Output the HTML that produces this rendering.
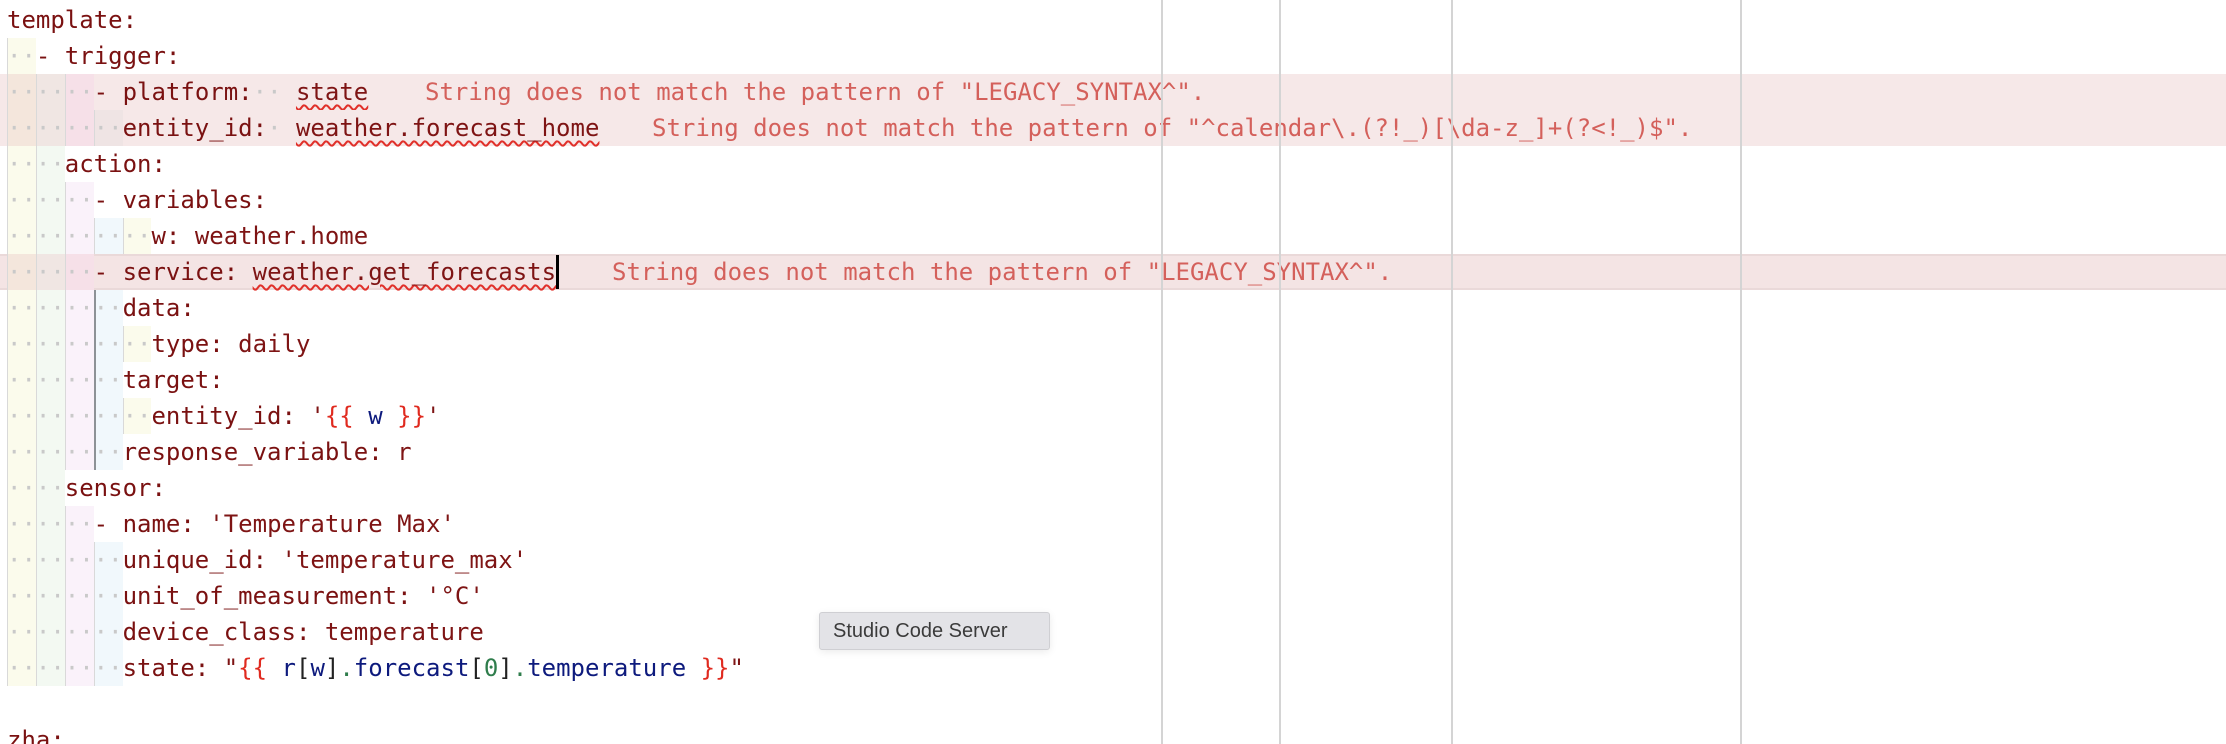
<!DOCTYPE html>
<html><head><meta charset="utf-8"><style>
html,body{margin:0;padding:0;background:#fff;width:2226px;height:744px;overflow:hidden;position:relative}
.l{position:absolute;left:0;width:2226px;height:36px;line-height:36px;white-space:pre;font-family:"DejaVu Sans Mono","Liberation Mono",monospace;font-size:24px;color:#7a1111;padding-left:7px;box-sizing:border-box}
.e{background:#f6e8e8}
.c{background:#f4e4e4;box-shadow:inset 0 2px 0 #ead9d9,inset 0 -2px 0 #ead9d9}
.b{display:inline-block;width:28.9px;height:36px;vertical-align:top;color:#c9c9c9;box-shadow:inset 1px 0 0 #d9d9d9;overflow:hidden}
.y{background:#fbfbec}.g{background:#f3f9f2}.p{background:#faf2fa}.u{background:#f1f8fc}
.e .y{background:#f4e6dc}.e .g{background:#f0e6e3}.e .p{background:#f6e0e8}.e .u{background:#efe4e4}
.c .y{background:#f4e6dc}.c .g{background:#f0e6e3}.c .p{background:#f6e0e8}
.dk{box-shadow:inset 2px 0 0 #8d9296}
.d{color:#c9c9c9}
.v{color:#7e1414}
.w{text-decoration:underline wavy #e0302a;text-decoration-thickness:1.5px;text-underline-offset:4px}
.m{position:absolute;color:#d4605b}
.r{color:#e02a1f}.n{color:#0d1a7d}.gr{color:#2f7d4c}.k{color:#222}
.vl{position:absolute;top:0;width:2px;height:744px;background:#d4d4d4}
.cur{display:inline-block;width:3px;height:34px;background:#000;vertical-align:top;margin-top:1px}
.tip{position:absolute;left:819px;top:612px;width:231px;height:38px;background:#e3e3e7;border:1px solid #cfcfd3;border-radius:3px;box-sizing:border-box;font-family:"Liberation Sans",sans-serif;font-size:20px;color:#3b3b3b;line-height:36px;padding-left:13px;box-shadow:0 2px 8px rgba(0,0,0,.08)}
</style></head><body>
<div class="l" style="top:2px">template:</div>
<div class="l" style="top:38px"><span class="b y">··</span>- trigger:</div>
<div class="l e" style="top:74px"><span class="b y">··</span><span class="b g">··</span><span class="b p">··</span>- platform:<span class="d">··</span> <span class="v w">state</span><span class="m" style="left:425px">String does not match the pattern of "LEGACY_SYNTAX^".</span></div>
<div class="l e" style="top:110px"><span class="b y">··</span><span class="b g">··</span><span class="b p">··</span><span class="b u">··</span>entity_id:<span class="d">·</span> <span class="v w">weather.forecast_home</span><span class="m" style="left:652px">String does not match the pattern of "^calendar\.(?!_)[\da-z_]+(?&lt;!_)$".</span></div>
<div class="l" style="top:146px"><span class="b y">··</span><span class="b g">··</span>action:</div>
<div class="l" style="top:182px"><span class="b y">··</span><span class="b g">··</span><span class="b p">··</span>- variables:</div>
<div class="l" style="top:218px"><span class="b y">··</span><span class="b g">··</span><span class="b p">··</span><span class="b u">··</span><span class="b y">··</span>w: <span class="v">weather.home</span></div>
<div class="l c" style="top:254px"><span class="b y">··</span><span class="b g">··</span><span class="b p">··</span>- service: <span class="v w">weather.get_forecasts</span><span class="cur"></span><span class="m" style="left:612px">String does not match the pattern of "LEGACY_SYNTAX^".</span></div>
<div class="l" style="top:290px"><span class="b y">··</span><span class="b g">··</span><span class="b p">··</span><span class="b u dk">··</span>data:</div>
<div class="l" style="top:326px"><span class="b y">··</span><span class="b g">··</span><span class="b p">··</span><span class="b u dk">··</span><span class="b y">··</span>type: <span class="v">daily</span></div>
<div class="l" style="top:362px"><span class="b y">··</span><span class="b g">··</span><span class="b p">··</span><span class="b u dk">··</span>target:</div>
<div class="l" style="top:398px"><span class="b y">··</span><span class="b g">··</span><span class="b p">··</span><span class="b u dk">··</span><span class="b y">··</span>entity_id: <span class="v">'</span><span class="r">{{ </span><span class="n">w</span><span class="r"> }}</span><span class="v">'</span></div>
<div class="l" style="top:434px"><span class="b y">··</span><span class="b g">··</span><span class="b p">··</span><span class="b u dk">··</span>response_variable: <span class="v">r</span></div>
<div class="l" style="top:470px"><span class="b y">··</span><span class="b g">··</span>sensor:</div>
<div class="l" style="top:506px"><span class="b y">··</span><span class="b g">··</span><span class="b p">··</span>- name: <span class="v">'Temperature Max'</span></div>
<div class="l" style="top:542px"><span class="b y">··</span><span class="b g">··</span><span class="b p">··</span><span class="b u">··</span>unique_id: <span class="v">'temperature_max'</span></div>
<div class="l" style="top:578px"><span class="b y">··</span><span class="b g">··</span><span class="b p">··</span><span class="b u">··</span>unit_of_measurement: <span class="v">'°C'</span></div>
<div class="l" style="top:614px"><span class="b y">··</span><span class="b g">··</span><span class="b p">··</span><span class="b u">··</span>device_class: <span class="v">temperature</span></div>
<div class="l" style="top:650px"><span class="b y">··</span><span class="b g">··</span><span class="b p">··</span><span class="b u">··</span>state: <span class="v">"</span><span class="r">{{ </span><span class="n">r</span><span class="k">[</span><span class="n">w</span><span class="k">]</span><span class="gr">.</span><span class="n">forecast</span><span class="k">[</span><span class="gr">0</span><span class="k">]</span><span class="gr">.</span><span class="n">temperature</span><span class="r"> }}</span><span class="v">"</span></div>
<div class="l" style="top:722px">zha:</div>
<div class="vl" style="left:1161px"></div>
<div class="vl" style="left:1279px"></div>
<div class="vl" style="left:1451px"></div>
<div class="vl" style="left:1740px"></div>
<div class="tip">Studio Code Server</div>
</body></html>
